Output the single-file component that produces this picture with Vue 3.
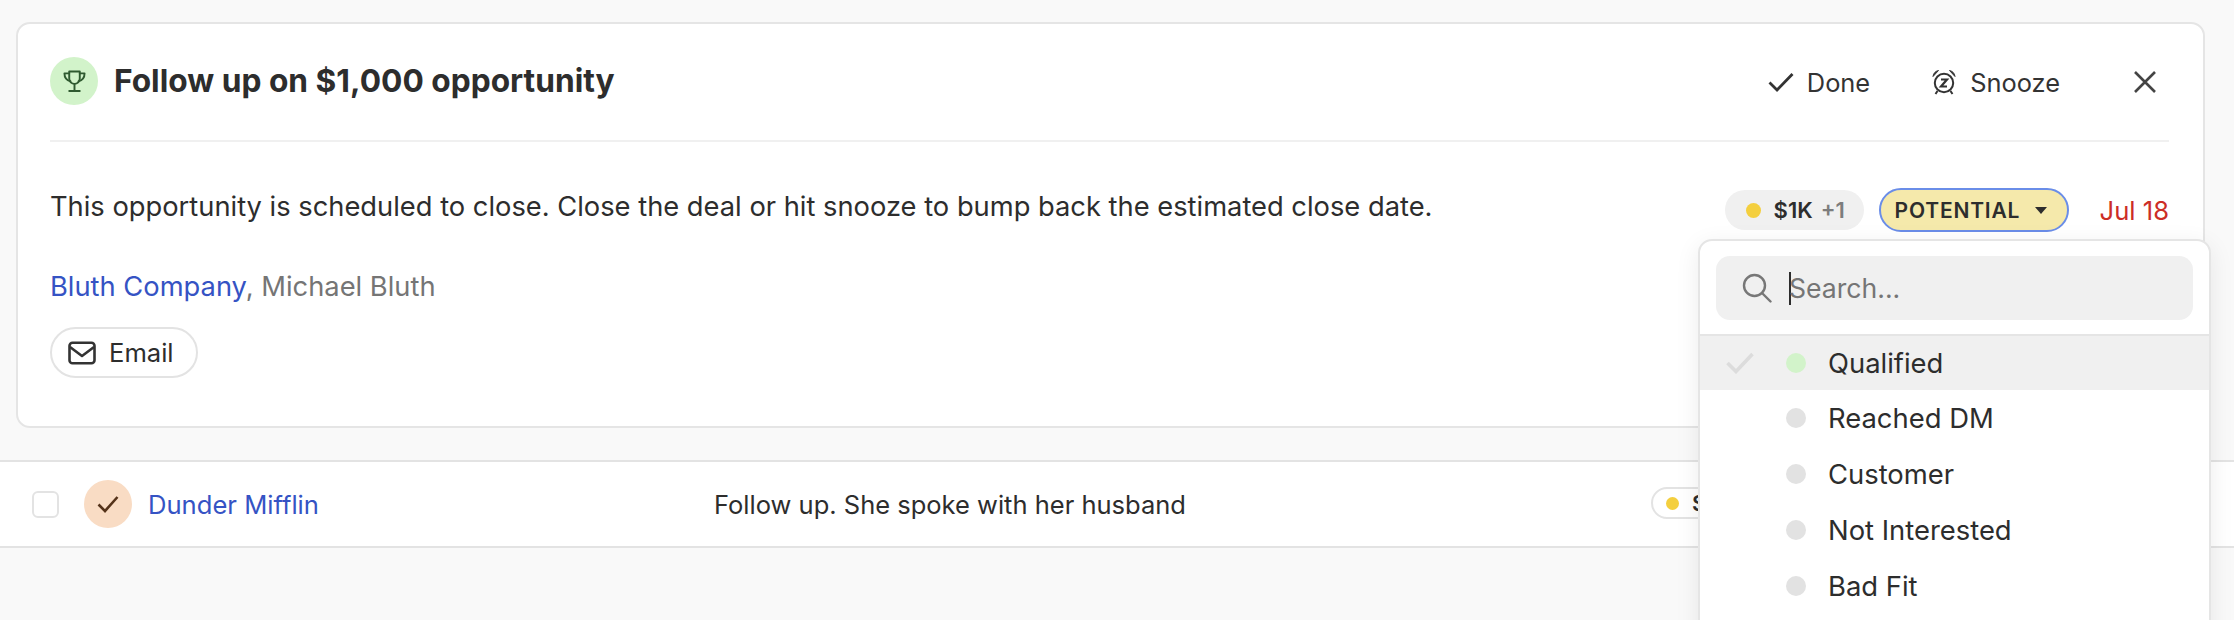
<script setup>
const options = [
  { label: 'Qualified', active: true },
  { label: 'Reached DM' },
  { label: 'Customer' },
  { label: 'Not Interested' },
  { label: 'Bad Fit' },
]
</script>

<template>
  <div class="page">
    <section class="card">
      <header class="card-head">
        <div class="title-wrap">
          <span class="trophy-badge">
            <svg width="23" height="24" viewBox="0 0 24 24" fill="none" stroke="#2f5a30" stroke-width="2" stroke-linecap="round" stroke-linejoin="round">
              <path d="M6.500 2h11v7.500a5.500 5.500 0 0 1-11 0z" />
              <path d="M6.500 4H1.500c0 4.500 1.800 7.300 6.300 8.300M17.500 4h5c0 4.500-1.800 7.300-6.300 8.300" />
              <path d="M12 15v7M6.500 22.500h11" />
            </svg>
          </span>
          <h1 class="title">Follow up on $1,000 opportunity</h1>
        </div>
        <div class="actions">
          <button class="action done">
            <svg width="26" height="20" viewBox="0 0 26 20" fill="none" stroke="#333" stroke-width="2.800">
              <path d="M1.500 10.500 9 18 24.500 2" />
            </svg>
            Done
          </button>
          <button class="action snooze">
            <svg width="26" height="26" viewBox="0 0 26 26" fill="none" stroke="#333" stroke-width="2">
              <circle cx="13" cy="14" r="9.200" />
              <path d="M10 10.500h6l-6 7h6" stroke-width="2.200" />
              <path d="M2 7.500C2.500 4 4.500 2.200 7.500 1.500zM24 7.500C23.500 4 21.500 2.200 18.500 1.500z" fill="#333" stroke-width="1" stroke-linejoin="round" />
              <path d="M6.500 22l-2 3M19.500 22l2 3" />
            </svg>
            Snooze
          </button>
          <button class="close" aria-label="Close">
            <svg width="24" height="24" viewBox="0 0 24 24" fill="none" stroke="#444" stroke-width="2.600">
              <path d="M2 2l20 20M22 2 2 22" />
            </svg>
          </button>
        </div>
      </header>

      <div class="card-body">
        <div class="body-main">
          <p class="message">This opportunity is scheduled to close. Close the deal or hit snooze to bump back the estimated close date.</p>
          <p class="people"><a class="link">Bluth Company</a>, Michael Bluth</p>
          <button class="email">
            <svg width="28" height="24" viewBox="0 0 28 24" fill="none" stroke="#333" stroke-width="2.600" stroke-linejoin="round">
              <rect x="1.500" y="1.800" width="25" height="20.400" rx="3" />
              <path d="M2 6l12 9 12-9" />
            </svg>
            Email
          </button>
        </div>
        <div class="meta">
          <span class="amount"><i class="dot yellow"></i><b>$1K</b><em>+1</em></span>
          <span class="stage">POTENTIAL<i class="caret"></i></span>
          <span class="date">Jul 18</span>
        </div>
      </div>
    </section>

    <div class="row">
      <span class="checkbox"></span>
      <span class="avatar">
        <svg width="22" height="18" viewBox="0 0 22 18" fill="none" stroke="#55331a" stroke-width="2.600">
          <path d="M1.500 9.500 8 16 20.500 2" />
        </svg>
      </span>
      <a class="link row-name">Dunder Mifflin</a>
      <span class="row-text">Follow up. She spoke with her husband</span>
      <span class="row-pill"><i class="dot yellow small"></i><b>$1K</b></span>
    </div>

    <div class="menu">
      <div class="search-wrap">
        <div class="search">
          <svg width="30" height="30" viewBox="0 0 30 30" fill="none" stroke="#777" stroke-width="2.400" stroke-linecap="round">
            <circle cx="12.500" cy="12.500" r="10.500" />
            <path d="M20.500 20.500l8 8" />
          </svg>
          <span class="cursor"></span>
          <span class="placeholder">Search...</span>
        </div>
      </div>
      <ul class="options">
        <li v-for="o in options" :key="o.label" class="option" :class="{ active: o.active }">
          <span class="check">
            <svg v-if="o.active" width="28" height="22" viewBox="0 0 28 22" fill="none" stroke="#dcdcdc" stroke-width="3.600">
              <path d="M1.500 11 10 19.500 26.500 2" />
            </svg>
          </span>
          <i class="opt-dot"></i>
          <span class="opt-label">{{ o.label }}</span>
        </li>
      </ul>
    </div>
  </div>
</template>

<style>
html, body { margin: 0; height: 100%; overflow: hidden; background: #f9f9f9; }
</style>

<style scoped>
.page {
  position: relative;
  width: 2234px;
  height: 620px;
  overflow: hidden;
  background: #f9f9f9;
  padding-top: 22px;
  box-sizing: border-box;
  font-family: Inter, "Liberation Sans", sans-serif;
  color: #2d2d2d;
}
.card {
  margin: 0 29px 0 16px;
  height: 406px;
  box-sizing: border-box;
  border: 2px solid #e5e5e5;
  border-radius: 14px;
  background: #fff;
  padding: 0 34px 0 32px;
}
.card-head {
  height: 118px;
  box-sizing: border-box;
  display: flex;
  align-items: center;
  justify-content: space-between;
  border-bottom: 2px solid #f0f0f0;
}
.title-wrap { display: flex; align-items: center; gap: 16px; margin-top: -2px; }
.trophy-badge {
  width: 48px; height: 48px; border-radius: 50%;
  background: #d2f3ca;
  display: flex; align-items: center; justify-content: center;
}
.title { margin: 0; font-size: 31.700px; font-weight: 650; line-height: 40px; }
.actions { display: flex; align-items: center; }
button { font: inherit; color: inherit; background: none; border: 0; padding: 0; }
.action { display: flex; align-items: center; font-size: 25.400px; color: #333; }
.done { gap: 13px; margin-right: 61px; }
.snooze { gap: 13px; margin-right: 73px; }
.close { display: flex; margin-right: 12px; }

.card-body { display: flex; justify-content: space-between; }
.message { margin: 0; padding-top: 45px; font-size: 27.300px; line-height: 40px; color: #2d2d2d; }
.people { margin: 40px 0 0; font-size: 27.300px; line-height: 40px; color: #757575; }
.link { color: #3553c4; }
.email {
  margin-top: 20px;
  height: 51px; width: 148px;
  box-sizing: border-box;
  padding-left: 16px;
  border: 2px solid #e3e3e3;
  border-radius: 26px;
  display: flex; align-items: center; gap: 13px;
  font-size: 25.600px;
  color: #2d2d2d;
}
.meta { display: flex; align-items: center; height: 44px; margin-top: 46px; }
.amount {
  display: flex; align-items: center;
  height: 40px; width: 139px; box-sizing: border-box;
  padding-left: 21px;
  border-radius: 20px;
  background: #f0f0f0;
  font-size: 22px;
}
.amount b { font-weight: 600; margin-left: 13px; }
.amount em { font-style: normal; font-weight: 600; color: #7d7d7d; margin-left: 8px; }
.dot { display: block; width: 15px; height: 15px; border-radius: 50%; }
.yellow { background: #f4cf3e; }
.small { width: 13px; height: 13px; }
.stage {
  margin-left: 15px;
  display: flex; align-items: center;
  height: 44px; width: 190px; box-sizing: border-box;
  padding-left: 14px;
  border: 2px solid #6a8de8;
  border-radius: 22px;
  background: #f5e9ab;
  font-size: 21px; font-weight: 600; letter-spacing: 0.8px;
}
.caret {
  margin-left: 15px;
  width: 0; height: 0;
  border-left: 6px solid transparent;
  border-right: 6px solid transparent;
  border-top: 7px solid #2d2d2d;
}
.date { margin-left: 31px; font-size: 25.600px; color: #cc2d26; }

.row {
  margin-top: 32px;
  height: 88px;
  box-sizing: border-box;
  border-top: 2px solid #e3e3e3;
  border-bottom: 2px solid #e3e3e3;
  background: #fff;
  display: flex;
  align-items: center;
  position: relative;
}
.checkbox {
  margin-left: 32px;
  width: 27px; height: 27px; box-sizing: border-box;
  border: 2px solid #e3e3e3; border-radius: 6px;
}
.avatar {
  margin-left: 25px;
  width: 48px; height: 48px; border-radius: 50%;
  background: #f9dcc4;
  display: flex; align-items: center; justify-content: center;
}
.row-name { margin-left: 16px; font-size: 25.600px; width: 566px; }
.row-text { font-size: 25.500px; color: #2d2d2d; }
.row-pill {
  position: absolute; left: 1651px; top: 25px;
  height: 32px; width: 100px; box-sizing: border-box;
  display: flex; align-items: center; gap: 13px;
  padding-left: 13px;
  border: 2px solid #e3e3e3; border-radius: 16px;
  font-size: 22px;
}
.row-pill b { font-weight: 600; }

.menu {
  position: absolute;
  left: 1698px; top: 239px;
  width: 513px; height: 420px;
  box-sizing: border-box;
  background: #fff;
  border: 2px solid #e5e5e5;
  border-radius: 14px;
  box-shadow: 0 6px 24px rgba(0, 0, 0, 0.08);
}
.search-wrap { padding: 15px 16px 14px; border-bottom: 2px solid #e5e5e5; }
.search {
  height: 64px;
  border-radius: 14px;
  background: #f0f0f0;
  display: flex; align-items: center;
  padding-left: 26px;
  font-size: 26.600px;
  color: #757575;
}
.cursor { width: 2px; height: 33px; background: #2d2d2d; margin-left: 17px; }
.placeholder { margin-left: -2px; }
.options { list-style: none; margin: 0; padding: 0; }
.option { height: 56px; display: flex; align-items: center; font-size: 27.400px; color: #2d2d2d; }
.option.active { background: #f0f0f0; height: 54px; }
.check { width: 60px; margin-left: 26px; display: flex; }
.opt-dot { display: block; width: 20px; height: 20px; border-radius: 50%; background: #e2e2e2; }
.active .opt-dot { background: #d2f3ca; }
.opt-label { margin-left: 22px; }
</style>
